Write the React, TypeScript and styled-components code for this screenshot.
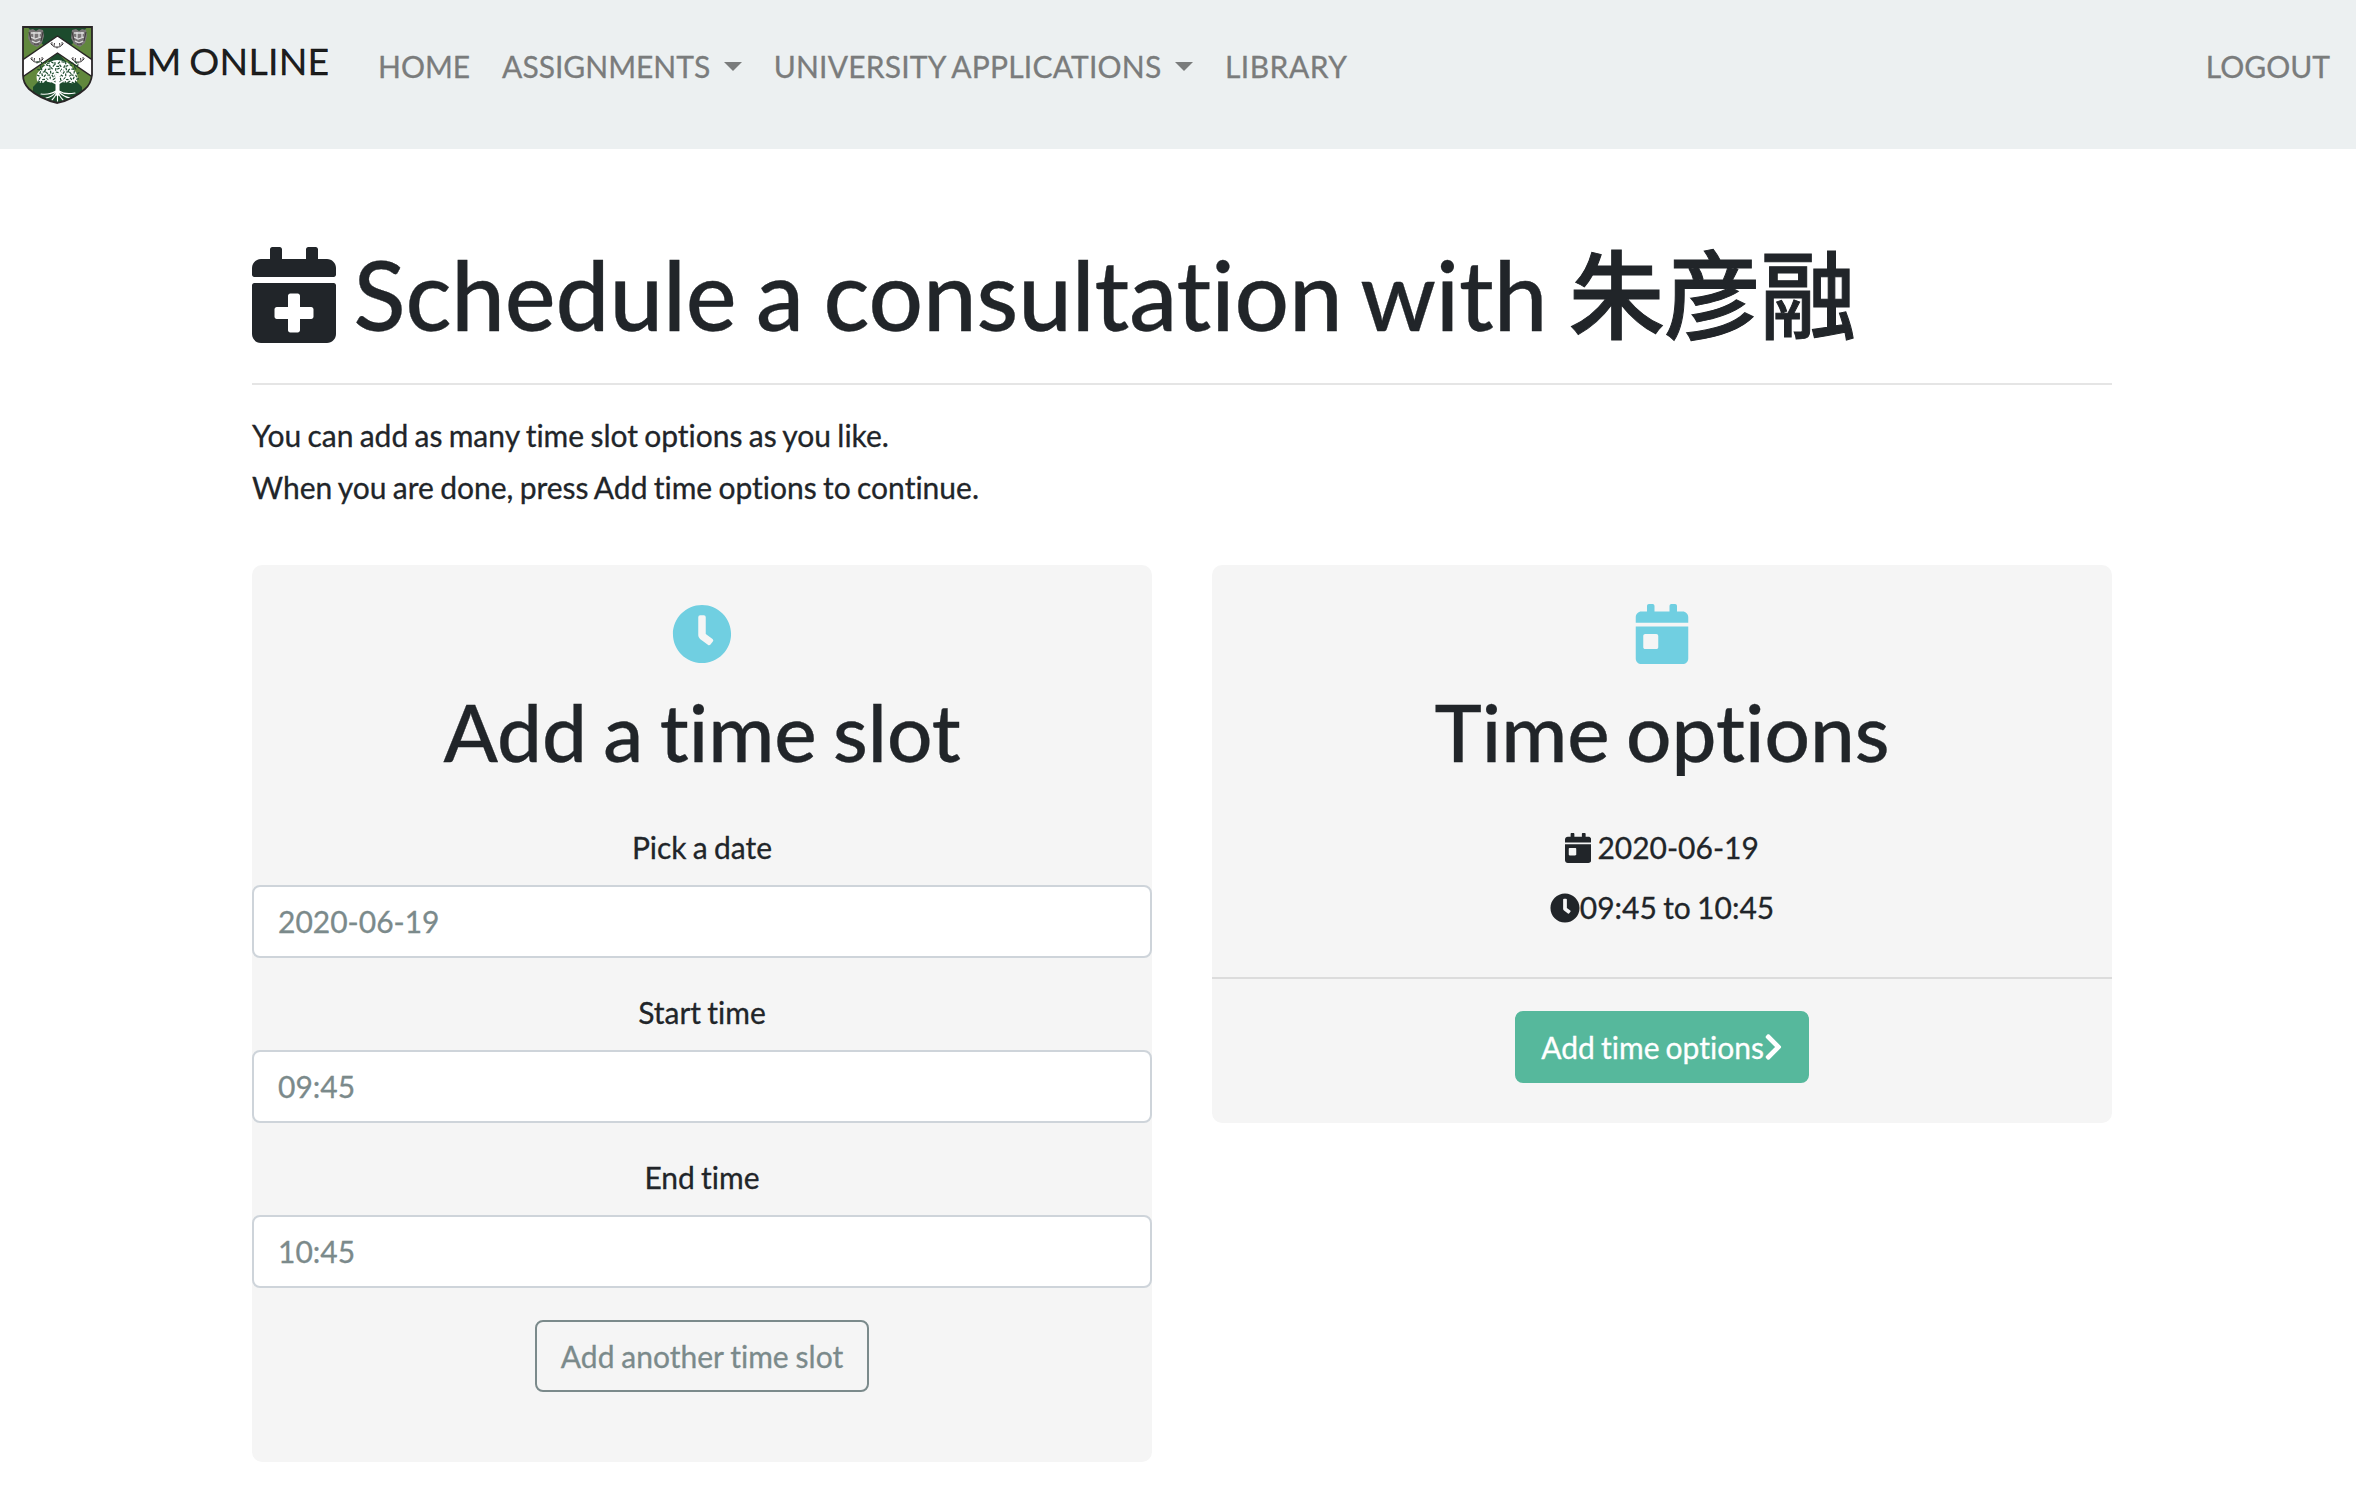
import React from "react";
import styled, { createGlobalStyle } from "styled-components";
import { FaCalendarPlus, FaClock, FaCalendarDay, FaChevronRight } from "react-icons/fa";

const GlobalStyle = createGlobalStyle`
  *, *::before, *::after { box-sizing: border-box; }
  body {
    margin: 0;
    background: #fff;
    color: #212529;
    font-family: Lato, "Noto Sans CJK SC", sans-serif;
    font-size: 30px;
    line-height: 45px;
    font-variant-ligatures: none;
    word-spacing: -1.4px;
    -webkit-text-stroke: 0.3px currentColor;
    overflow: hidden;
  }
  svg { flex: none; }
`;

const Navbar = styled.nav`
  display: flex;
  align-items: flex-start;
  height: 149px;
  padding: 24px 10px 0 20px;
  background: #ecf0f1;
`;

const Brand = styled.a`
  display: flex;
  align-items: flex-start;
  gap: 9px;
  width: 310px;
  margin-right: 32px;
  color: rgba(0, 0, 0, 0.9);
  font-size: 37.5px;
  line-height: 56px;
  letter-spacing: 0.25px;
  word-spacing: -2px;
  white-space: nowrap;
`;

const BrandName = styled.span`
  margin-top: 9px;
`;

const NavGroup = styled.div<{ $end?: boolean }>`
  display: flex;
  margin-top: 20px;
  margin-left: ${(p) => (p.$end ? "auto" : "0")};
`;

const NavLink = styled.a<{ $tracking?: number }>`
  display: flex;
  align-items: center;
  padding: 0 16px;
  color: #7a7c7c;
  letter-spacing: ${(p) => p.$tracking ?? 0}px;
  word-spacing: -1px;
  white-space: nowrap;
`;

const Caret = styled.span`
  margin-left: 13.5px;
  border-top: 9px solid currentColor;
  border-left: 9px solid transparent;
  border-right: 9px solid transparent;
`;

const Container = styled.main`
  width: 1860px;
  margin-left: 252px;
  padding-top: 87px;
`;

const PageTitle = styled.h1`
  display: flex;
  gap: 17.5px;
  margin: 0;
  height: 115px;
  font-size: 96px;
  font-weight: 500;
  line-height: 115px;
  letter-spacing: -0.1px;
  word-spacing: -4.6px;
  white-space: nowrap;

  svg {
    width: 0.875em;
    margin-top: 11px;
  }
`;

const Name = styled.span`
  margin-left: 1.5px;
  -webkit-text-stroke-width: 1px;
`;

const Rule = styled.hr<{ $top: number; $bottom: number }>`
  height: 2px;
  margin: ${(p) => p.$top}px 0 ${(p) => p.$bottom}px;
  border: 0;
  background: rgba(0, 0, 0, 0.1);
`;

const Intro = styled.p`
  margin: 0 0 52px;
  line-height: 52px;
`;

const Columns = styled.div`
  display: grid;
  grid-template-columns: 1fr 1fr;
  align-items: start;
  gap: 60px;
`;

const Card = styled.section<{ $bottom: number }>`
  display: flex;
  flex-direction: column;
  align-items: stretch;
  padding: 39px 0 ${(p) => p.$bottom}px;
  border-radius: 10px;
  background: #f5f5f5;
  text-align: center;
`;

const CardIcon = styled.div`
  display: flex;
  justify-content: center;
  height: 60px;
  color: #70cfe1;
  font-size: 60px;
`;

const CardTitle = styled.h2`
  margin: 19px 0 46px;
  font-size: 80px;
  font-weight: 500;
  line-height: 96px;
  word-spacing: -3.8px;
`;

const Field = styled.label`
  display: flex;
  flex-direction: column;
  gap: 15px;
  margin-bottom: 32px;
`;

const Input = styled.input`
  width: 100%;
  height: 73px;
  padding: 11px 24px 13px;
  border: 2px solid #ced4da;
  border-radius: 8px;
  background: #fff;
  color: #7b8a8b;
  font: inherit;
`;

const Button = styled.button<{ $solid?: boolean }>`
  display: flex;
  align-items: center;
  align-self: center;
  height: 72px;
  padding: 0 24px;
  border: 2px solid ${(p) => (p.$solid ? "#56b89c" : "#7b8a8b")};
  border-radius: 8px;
  background: ${(p) => (p.$solid ? "#56b89c" : "transparent")};
  color: ${(p) => (p.$solid ? "#fff" : "#7b8a8b")};
  font: inherit;
  font-variant-ligatures: none;
  word-spacing: ${(p) => (p.$solid ? "-1.6px" : "-0.8px")};

  svg { width: 0.625em; }
`;

const Option = styled.div<{ $gap?: number }>`
  display: flex;
  justify-content: center;
  align-items: center;
  gap: ${(p) => p.$gap ?? 0}px;
  margin-bottom: 15px;
`;

const DayIcon = styled(FaCalendarDay)`
  width: 0.875em;
`;

const SHIELD = "M3 3H72V51Q71 60 65 65Q54 75 37.5 79Q20 75 9 65Q3 59 3 51Z";
const CHEVRON = "M37.5 12L74 37V54L37.5 29L1 54V37Z";

/* Gaps between the leaves of the elm: a staggered grid laid over the crown. */
const leafGaps = Array.from({ length: 84 }, (_, i) => {
  const row = Math.floor(i / 12);
  const col = i % 12;
  return {
    x: 18 + col * 3.4 + (row % 2) * 1.7 + ((i * 7) % 5) * 0.25,
    y: 38 + row * 3.2 + ((i * 11) % 7) * 0.25,
    turn: (i * 53) % 180,
  };
});

function Crest() {
  return (
    <svg width="76" height="84" viewBox="0 0 76 84" aria-hidden="true">
      <defs>
        <clipPath id="shield">
          <path d={SHIELD} />
        </clipPath>
        <g id="head">
          <path d="M-7-7L-3-8L0-6L3-8L7-7L8-1L6 6L1 10L-5 7L-8 1Z" fill="#7a7677" />
          <path d="M-5-4H5M-5 0L-1 2L5 0M-4 4L0 6L4 4M-2-5V1M3-5V1" stroke="#dedede" strokeWidth="1.3" fill="none" />
          <path d="M-7-5L-5 3M7-5L5 4M-2 7H3" stroke="#302b2c" strokeWidth=".8" />
        </g>
        <path
          id="antlers"
          d="M-2 3Q-6 2-5-2M2 3Q6 2 5-2M-3 2L-2.500-1M3 2L2.500-1M-5 1L-6.500-.5M5 1L6.500-.5M-2 3H2M0 3V4.500"
          fill="none" stroke="#292526" strokeWidth=".9"
        />
      </defs>
      <g clipPath="url(#shield)">
        <path d="M0 0H76V84H0Z" fill="#61883d" />
        <path d="M5 0H70L37 37Z" fill="#1c4b2d" />
        <path d="M37 28L54 46L43 60L66 84H8L32 60L20 46Z" fill="#1c4b2d" />
        <path d="M13 63L37 38L62 63L62 84H13Z" fill="#1c4b2d" />
        <path d={CHEVRON} fill="#fff" stroke="#292526" strokeWidth="1.4" />
        <use href="#head" x="16" y="13" />
        <use href="#head" x="59" y="13" />
        <use href="#antlers" x="37" y="20" />
        <use href="#antlers" x="17" y="35" />
        <use href="#antlers" x="58" y="35" />
        <path
          d="M17 57Q15 48 22 45Q23 39 30 38Q37 34 45 38Q51 39 53 45Q59 50 57 57Q54 61 48 58Q44 60 40 57L35 57Q30 60 26 57Q22 61 17 57Z"
          fill="#fff"
        />
        <g stroke="#1c4b2d" strokeWidth="1.2">
          {leafGaps.map((gap, i) => (
            <path key={i} d="M-1.400 0H1.400" transform={`translate(${gap.x} ${gap.y}) rotate(${gap.turn})`} />
          ))}
        </g>
        <g stroke="#fff" fill="none" strokeLinecap="round">
          <path d="M37.500 70V53" strokeWidth="4" />
          <path d="M37 60Q31 58 27 53M38 60Q44 57 49 52M37 54L33 46M38 54L43 45" strokeWidth="1.400" />
          <path
            d="M36 67Q30 71 21 70M36 68Q32 73 26 74M37 69Q34 74 32 76M39 67Q45 71 55 69M39 68Q44 73 50 74M38 69Q41 74 43 76M37.500 70V77"
            strokeWidth="1.100"
          />
        </g>
      </g>
      <path d={SHIELD} fill="none" stroke="#292526" strokeWidth="1.800" />
    </svg>
  );
}

const fields = [
  { label: "Pick a date", value: "2020-06-19" },
  { label: "Start time", value: "09:45" },
  { label: "End time", value: "10:45" },
];

export default function App() {
  return (
    <>
      <GlobalStyle />
      <Navbar>
        <Brand>
          <Crest />
          <BrandName>ELM ONLINE</BrandName>
        </Brand>
        <NavGroup>
          <NavLink>HOME</NavLink>
          <NavLink>ASSIGNMENTS<Caret /></NavLink>
          <NavLink $tracking={0.2}>UNIVERSITY APPLICATIONS<Caret /></NavLink>
          <NavLink $tracking={0.5}>LIBRARY</NavLink>
        </NavGroup>
        <NavGroup $end>
          <NavLink>LOGOUT</NavLink>
        </NavGroup>
      </Navbar>
      <Container>
        <PageTitle>
          <FaCalendarPlus />
          <span>Schedule a consultation with <Name>朱彦融</Name></span>
        </PageTitle>
        <Rule $top={32} $bottom={24} />
        <Intro>
          You can add as many time slot options as you like.
          <br />
          When you are done, press Add time options to continue.
        </Intro>
        <Columns>
          <Card $bottom={70}>
            <CardIcon><FaClock /></CardIcon>
            <CardTitle>Add a time slot</CardTitle>
            {fields.map((f) => (
              <Field key={f.label}>
                {f.label}
                <Input defaultValue={f.value} />
              </Field>
            ))}
            <Button>Add another time slot</Button>
          </Card>
          <Card $bottom={40}>
            <CardIcon><FaCalendarDay /></CardIcon>
            <CardTitle>Time options</CardTitle>
            <Option $gap={6}><DayIcon />2020-06-19</Option>
            <Option><FaClock />09:45 to 10:45</Option>
            <Rule $top={32} $bottom={32} />
            <Button $solid>Add time options<FaChevronRight /></Button>
          </Card>
        </Columns>
      </Container>
    </>
  );
}
